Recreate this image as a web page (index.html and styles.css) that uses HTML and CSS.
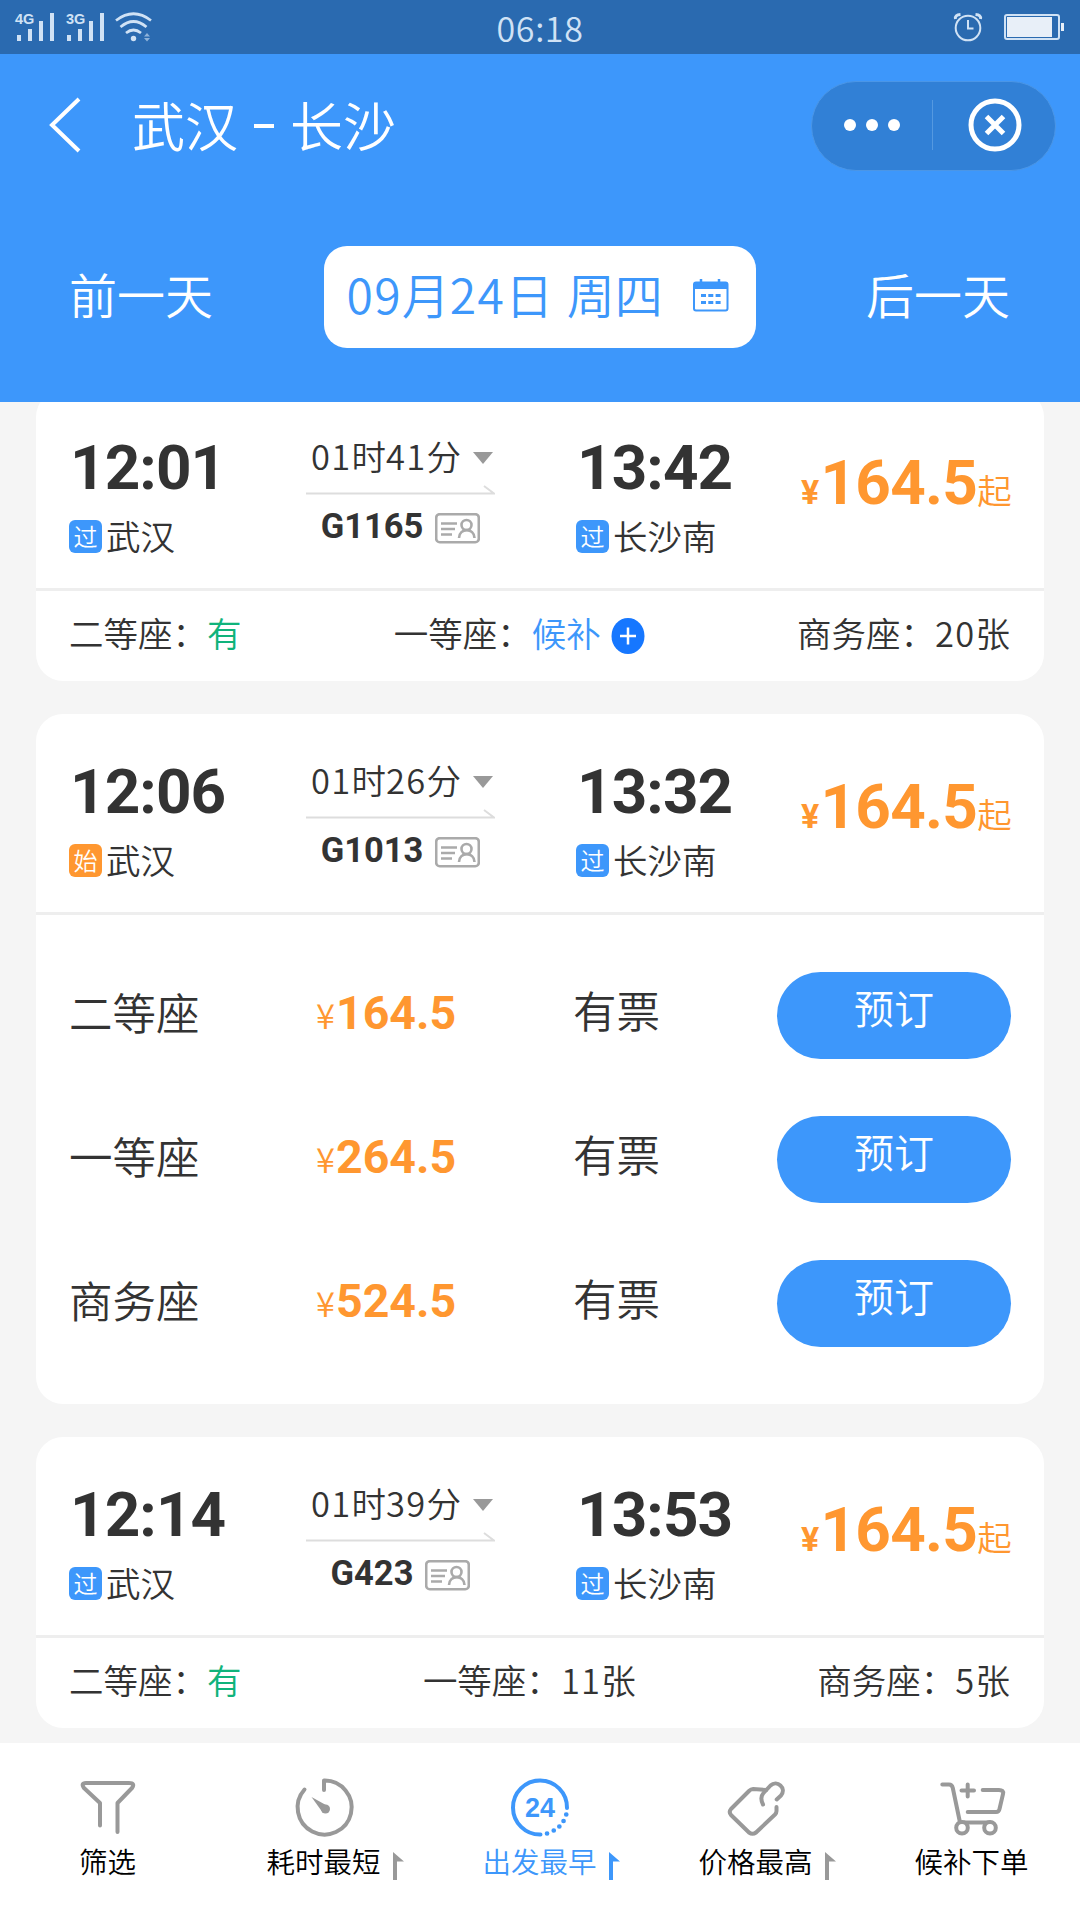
FILE: index.html
```html
<!DOCTYPE html>
<html lang="zh-CN">
<head>
  <meta charset="UTF-8">
  <meta name="viewport" content="width=device-width, initial-scale=1.0">
  <title>武汉 - 长沙</title>
  <link rel="stylesheet" href="styles.css">
</head>
<body>

  <!-- iconos compartidos -->
  <svg class="defs" width="0" height="0">
    <symbol id="id-card" viewBox="0 0 45 31">
      <rect x="1.2" y="1.2" width="42.6" height="28" rx="3.5" fill="none" stroke="#aaa" stroke-width="2.6"/>
      <path d="M6 10.5H22M6 16H20M6 21.5H17" stroke="#aaa" stroke-width="2.6" fill="none"/>
      <circle cx="31.5" cy="12" r="5" fill="none" stroke="#aaa" stroke-width="2.6"/>
      <path d="M24 25C24 14.5 39.5 14.5 39.5 25" fill="none" stroke="#aaa" stroke-width="2.6"/>
    </symbol>
    <symbol id="arrow" viewBox="0 0 189 10">
      <path d="M0 8.5H188L178 1" fill="none" stroke="#ddd" stroke-width="2"/>
    </symbol>
    <symbol id="flag" viewBox="0 0 12 28">
      <path d="M0 0L11 9.5H4V28H0Z" fill="currentColor"/>
    </symbol>
  </svg>

  <div class="status-bar">
    <svg class="signals" width="160" height="54" viewBox="0 0 160 54" fill="#d0e2f5">
      <text x="15" y="24" class="net">4G</text>
      <path d="M17 35h4v6h-4zM28 29h4v12h-4zM39 21h4v20h-4zM50 13h4v28h-4z"/>
      <text x="66" y="24" class="net">3G</text>
      <path d="M67 35h4v6h-4zM78 29h4v12h-4zM89 21h4v20h-4zM100 13h4v28h-4z"/>
      <path d="M116 20.500Q133.500 7 151 20.500M120.500 27Q133.500 16 146.500 27M126 33Q133.500 27 141 33" fill="none" stroke="#d0e2f5" stroke-width="2.700"/>
      <circle cx="133.500" cy="38.500" r="2.700"/>
      <path d="M144 36.500l3-3.500 3 3.500zM144 38l3 3.500 3-3.500z" opacity=".6"/>
    </svg>
    <span class="clock">06:18</span>
    <svg class="battery" width="120" height="54" viewBox="950 0 120 54" fill="none" stroke="#d0e2f5" stroke-width="2">
      <circle cx="968" cy="28" r="12.300"/>
      <path d="M968 20v8.500h5.500"/>
      <path d="M955.500 19q-1-4 5-4.500M980.500 19q1-4-5-4.500" stroke-width="3"/>
      <rect x="1005" y="15" width="54" height="24" rx="2"/>
      <path d="M1007 17h45v20h-45zM1061 23h3v8h-3z" fill="#e8eff8" stroke="none"/>
    </svg>
  </div>

  <header class="header">
    <div class="nav">
      <svg class="back" width="34" height="54" viewBox="0 0 34 54"><path d="M31 1L4 27L31 53" fill="none" stroke="#fff" stroke-width="4"/></svg>
      <h1>武汉<span class="dash"></span>长沙</h1>
      <div class="capsule">
        <div class="dots"><i></i><i></i><i></i></div>
        <svg class="close" width="54" height="54" viewBox="0 0 54 54" fill="none" stroke="#fff" stroke-width="5">
          <circle cx="27" cy="27" r="24"/>
          <path d="M18.500 18.500L35.500 35.500M35.500 18.500L18.500 35.500"/>
        </svg>
      </div>
    </div>
    <div class="days">
      <span>前一天</span>
      <div class="date">
        <span><b>09</b>月<b>24</b>日 周四</span>
        <svg width="36" height="33" viewBox="0 0 36 33">
          <path d="M8 0V4M26 0V4" stroke="#3d97fb" stroke-width="2.500"/>
          <rect x="1" y="3.500" width="33.500" height="28" rx="2" fill="none" stroke="#3d97fb" stroke-width="2"/>
          <path d="M1 3.500H34V10H1z" fill="#3d97fb"/>
          <path d="M8 16.500H28M8 23.500H28" stroke="#3d97fb" stroke-width="3" stroke-dasharray="5 2.300"/>
        </svg>
      </div>
      <span>后一天</span>
    </div>
  </header>

  <main class="list">
    <section class="card">
      <div class="train">
        <div class="from">
          <div class="time">12:01</div>
          <div class="station"><span class="tag">过</span>武汉</div>
        </div>
        <div class="middle">
          <div class="duration"><b>01</b>时<b>41</b>分<i class="caret"></i></div>
          <svg class="line" width="189" height="10"><use href="#arrow"/></svg>
          <div class="number">G1165<svg width="45" height="31"><use href="#id-card"/></svg></div>
        </div>
        <div class="to">
          <div class="time">13:42</div>
          <div class="station"><span class="tag">过</span>长沙南</div>
        </div>
        <div class="price"><small>¥</small>164.5<em>起</em></div>
      </div>
      <div class="seats">
        <span>二等座：<span class="green">有</span></span>
        <span class="wait">一等座：<span class="blue">候补</span>
          <svg width="34" height="36" viewBox="0 0 34 36"><ellipse cx="17" cy="18" rx="16.500" ry="18" fill="#1677ff"/><path d="M9 18H25M17 9.500V26.500" stroke="#fff" stroke-width="2.500"/></svg>
        </span>
        <span>商务座：<b>20</b>张</span>
      </div>
    </section>

    <section class="card">
      <div class="train">
        <div class="from">
          <div class="time">12:06</div>
          <div class="station"><span class="tag orange">始</span>武汉</div>
        </div>
        <div class="middle">
          <div class="duration"><b>01</b>时<b>26</b>分<i class="caret"></i></div>
          <svg class="line" width="189" height="10"><use href="#arrow"/></svg>
          <div class="number">G1013<svg width="45" height="31"><use href="#id-card"/></svg></div>
        </div>
        <div class="to">
          <div class="time">13:32</div>
          <div class="station"><span class="tag">过</span>长沙南</div>
        </div>
        <div class="price"><small>¥</small>164.5<em>起</em></div>
      </div>
      <div class="booking">
        <div class="row">
          <span class="seat">二等座</span>
          <span class="fare"><small>¥</small>164.5</span>
          <span class="left">有票</span>
          <button>预订</button>
        </div>
        <div class="row">
          <span class="seat">一等座</span>
          <span class="fare"><small>¥</small>264.5</span>
          <span class="left">有票</span>
          <button>预订</button>
        </div>
        <div class="row">
          <span class="seat">商务座</span>
          <span class="fare"><small>¥</small>524.5</span>
          <span class="left">有票</span>
          <button>预订</button>
        </div>
      </div>
    </section>

    <section class="card">
      <div class="train">
        <div class="from">
          <div class="time">12:14</div>
          <div class="station"><span class="tag">过</span>武汉</div>
        </div>
        <div class="middle">
          <div class="duration"><b>01</b>时<b>39</b>分<i class="caret"></i></div>
          <svg class="line" width="189" height="10"><use href="#arrow"/></svg>
          <div class="number">G423<svg width="45" height="31"><use href="#id-card"/></svg></div>
        </div>
        <div class="to">
          <div class="time">13:53</div>
          <div class="station"><span class="tag">过</span>长沙南</div>
        </div>
        <div class="price"><small>¥</small>164.5<em>起</em></div>
      </div>
      <div class="seats">
        <span>二等座：<span class="green">有</span></span>
        <span>一等座：<b>11</b>张</span>
        <span>商务座：<b>5</b>张</span>
      </div>
    </section>
  </main>

  <nav class="tabs">
    <div class="tab">
      <svg class="icon" viewBox="0 0 60 60"><path d="M22 47.500V25L6 10Q2.500 5 8 5H51Q57.500 5 54 10L39.500 25V54"/></svg>
      <span>筛选</span>
    </div>
    <div class="tab">
      <svg class="icon" viewBox="0 0 60 60">
        <path d="M30 12V2.500A27 27 0 1 1 10.500 11.500"/>
        <path d="M17.500 19L35.500 29L29 35Z" fill="#999" stroke="none"/>
        <circle cx="31.500" cy="31" r="4.500" fill="#999" stroke="none"/>
      </svg>
      <span>耗时最短<svg class="flag" width="12" height="28"><use href="#flag"/></svg></span>
    </div>
    <div class="tab active">
      <svg class="icon" viewBox="0 0 60 60">
        <path d="M30.500 56.500A27 27 0 1 1 57 30"/>
        <path d="M37 55.500h.1M43.700 52.500h.1M49.300 48.500h.1M53.500 43h.1M56.200 36.500h.1" stroke-width="4.600"/>
        <text x="30" y="39" class="hours">24</text>
      </svg>
      <span>出发最早<svg class="flag" width="12" height="28"><use href="#flag"/></svg></span>
    </div>
    <div class="tab">
      <svg class="icon" viewBox="0 0 60 60">
        <path d="M50.500 29V33Q50.500 35 49 36.500L30 54.500Q26.500 57 23 54.500L5 37Q2.500 34 5 31L23 13Q25 11 27 11L40 12"/>
        <path d="M50.700 21.500L55 17.500C61 10 51 1.500 44.500 7.500L37.500 15Q33.500 19.500 37 26.500"/>
      </svg>
      <span>价格最高<svg class="flag" width="12" height="28"><use href="#flag"/></svg></span>
    </div>
    <div class="tab">
      <svg class="icon" viewBox="0 0 60 60">
        <path d="M.3 6.500H7Q10 6.500 10.800 10L18 44.500H48"/>
        <path d="M40.700 12H57Q62 12 61 16L57.500 31Q57 34 54 34H25.700M25.700 6.500V18.500M19.500 12.500H32"/>
        <circle cx="20" cy="49.700" r="5.800" fill="#fff"/>
        <circle cx="48" cy="49.700" r="5.800" fill="#fff"/>
      </svg>
      <span>候补下单</span>
    </div>
  </nav>

</body>
</html>
```
FILE: styles.css
```css
* {
  box-sizing: border-box;
}

body {
  margin: 0;
  width: 1080px;
  height: 1920px;
  overflow: hidden;
  display: flex;
  flex-direction: column;
  background-color: #f5f5f5;
  color: #333;
  font-family: "Noto Sans CJK SC", sans-serif;
  font-weight: 350;
}

svg {
  display: block;
  flex-shrink: 0;
  overflow: visible;
}

.defs {
  position: absolute;
}

b {
  font-weight: 350;
  letter-spacing: 1.3px;
}

/* barra de estado */
.status-bar {
  height: 54px;
  flex-shrink: 0;
  display: grid;
  grid-template-columns: 1fr auto 1fr;
  background-color: #2a6ab0;
  color: #d0e2f5;
}

.net {
  font: bold 14.5px "Liberation Sans", sans-serif;
}

.clock {
  font-size: 34px;
  line-height: 56px;
  letter-spacing: 0.6px;
}

.battery {
  justify-self: end;
  margin-right: 10px;
}

/* cabecera */
.header {
  height: 348px;
  flex-shrink: 0;
  background-color: #3d97fb;
  color: #fff;
}

.nav {
  display: flex;
  align-items: center;
  height: 144px;
  padding: 0 24px 0 48px;
}

.back {
  margin-bottom: 2px;
}

h1 {
  display: flex;
  align-items: center;
  margin: 0 0 4px 50px;
  font-size: 53px;
  line-height: 60px;
  font-weight: 350;
}

.dash {
  width: 20px;
  height: 4px;
  margin: 4px 16px 0 16px;
  background-color: #fff;
}

.capsule {
  display: flex;
  align-items: center;
  width: 245px;
  height: 90px;
  margin-left: auto;
  border: 1px solid #4b96e6;
  border-radius: 45px;
  background-color: #3180d6;
}

.dots {
  display: flex;
  justify-content: center;
  gap: 10px;
  width: 121px;
  height: 50px;
  align-items: center;
  border-right: 1px solid #5599e0;
}

.dots i {
  width: 12px;
  height: 12px;
  border-radius: 50%;
  background-color: #fff;
}

.capsule > * {
  margin-bottom: 2px;
}

.close {
  margin-left: 35px;
}

.days {
  display: flex;
  align-items: center;
  justify-content: space-between;
  padding: 48px 70px 0 69px;
  font-size: 48px;
  line-height: 70px;
}

.days > span {
  padding-bottom: 8px;
}

.date {
  display: flex;
  align-items: center;
  justify-content: space-between;
  width: 432px;
  height: 102px;
  padding: 0 27px 4px 23px;
  border-radius: 23px;
  background-color: #fff;
  color: #3d97fb;
}

.date span {
  margin-bottom: 4px;
  word-spacing: 3px;
}

/* lista de trenes */
.list {
  height: 1341px;
  flex-shrink: 0;
  overflow: hidden;
  padding: 0 36px;
}

.card {
  margin-bottom: 33px;
  border-radius: 27px;
  background-color: #fff;
}

.card:first-child {
  margin-top: -12px;
}

.train {
  display: grid;
  grid-template-columns: 237px 270px 200px 1fr;
  height: 201px;
  padding: 0 33px;
  border-bottom: 3px solid #eee;
}

.time {
  margin-top: 43px;
  padding-left: 1px;
  font: bold 62px/70px Roboto, sans-serif;
  letter-spacing: -0.9px;
}

.station {
  display: flex;
  align-items: center;
  margin-top: 7px;
  font-size: 34.5px;
  line-height: 50px;
}

.tag {
  width: 33px;
  height: 33px;
  margin: 3px 4px 0 0;
  border-radius: 6px;
  background-color: #3d97fb;
  color: #fff;
  font-size: 24px;
  line-height: 31px;
  text-align: center;
}

.orange {
  background-color: #ff9730;
}

.middle {
  width: 189px;
}

.duration {
  display: flex;
  align-items: center;
  margin-top: 40px;
  padding-left: 5px;
  font-size: 34.5px;
  line-height: 50px;
}

.caret {
  margin: 6px 0 0 12px;
  border: 10.5px solid transparent;
  border-top: 12px solid #999;
  border-bottom: 0;
}

.line {
  margin-top: 5px;
}

.number {
  display: flex;
  justify-content: center;
  gap: 12px;
  margin-top: 11px;
  font: bold 34.5px/40px Roboto, sans-serif;
}

.number svg {
  margin-top: 7px;
}

.price {
  margin-top: 54px;
  height: 80px;
  color: #ff9730;
  font: bold 62px/78px Roboto, sans-serif;
  letter-spacing: -0.7px;
  text-align: right;
  white-space: nowrap;
}

.price small {
  font-size: 34px;
  margin-right: 2px;
}

.price em {
  font: 350 34.5px/1 "Noto Sans CJK SC", sans-serif;
}

.seats {
  display: flex;
  align-items: center;
  justify-content: space-between;
  height: 90px;
  padding: 0 34px 9px 33px;
  font-size: 34.5px;
}

.wait {
  display: flex;
  align-items: center;
}

.wait svg {
  margin: 8px 0 0 10px;
}

.green {
  color: #10b37b;
}

.blue {
  color: #3d97fb;
}

/* asientos con botón de reserva */
.booking {
  padding: 28.5px 33px;
}

.row {
  display: grid;
  grid-template-columns: 247px 257px 204px 234px;
  align-items: center;
  height: 144px;
  font-size: 43.5px;
  line-height: 60px;
}

.seat {
  padding-bottom: 7px;
}

.left {
  padding-bottom: 12px;
}

.fare {
  padding-bottom: 5px;
  color: #ff9730;
  font: bold 46.5px/60px Roboto, sans-serif;
}

.fare small {
  margin-right: 1px;
  font: 350 34.5px/1 "Noto Sans CJK SC", sans-serif;
}

button {
  height: 87px;
  padding: 0 0 17px;
  border: none;
  border-radius: 43.5px;
  background-color: #3d97fb;
  color: #fff;
  font: 350 40px/60px "Noto Sans CJK SC", sans-serif;
}

/* barra inferior */
.tabs {
  flex: 1;
  display: grid;
  grid-template-columns: repeat(5, 216px);
  background-color: #fff;
  color: #000;
}

.tab {
  display: flex;
  flex-direction: column;
  align-items: center;
  padding-top: 35px;
}

.tab > span {
  position: relative;
  margin: 2px 1px 0 0;
  font-size: 28.5px;
  line-height: 42px;
}

.icon {
  width: 60px;
  height: 60px;
  fill: none;
  stroke: #999;
  stroke-width: 4;
  stroke-linecap: round;
  stroke-linejoin: round;
}

.active {
  color: #3d97fb;
}

.active .icon {
  stroke: #3d97fb;
}

.hours {
  font: bold 27px "Liberation Sans", sans-serif;
  fill: #3d97fb;
  stroke: none;
  text-anchor: middle;
}

.flag {
  position: absolute;
  left: 100%;
  top: 12px;
  margin-left: 12px;
  color: #999;
}

.active .flag {
  color: #3d97fb;
}
```
